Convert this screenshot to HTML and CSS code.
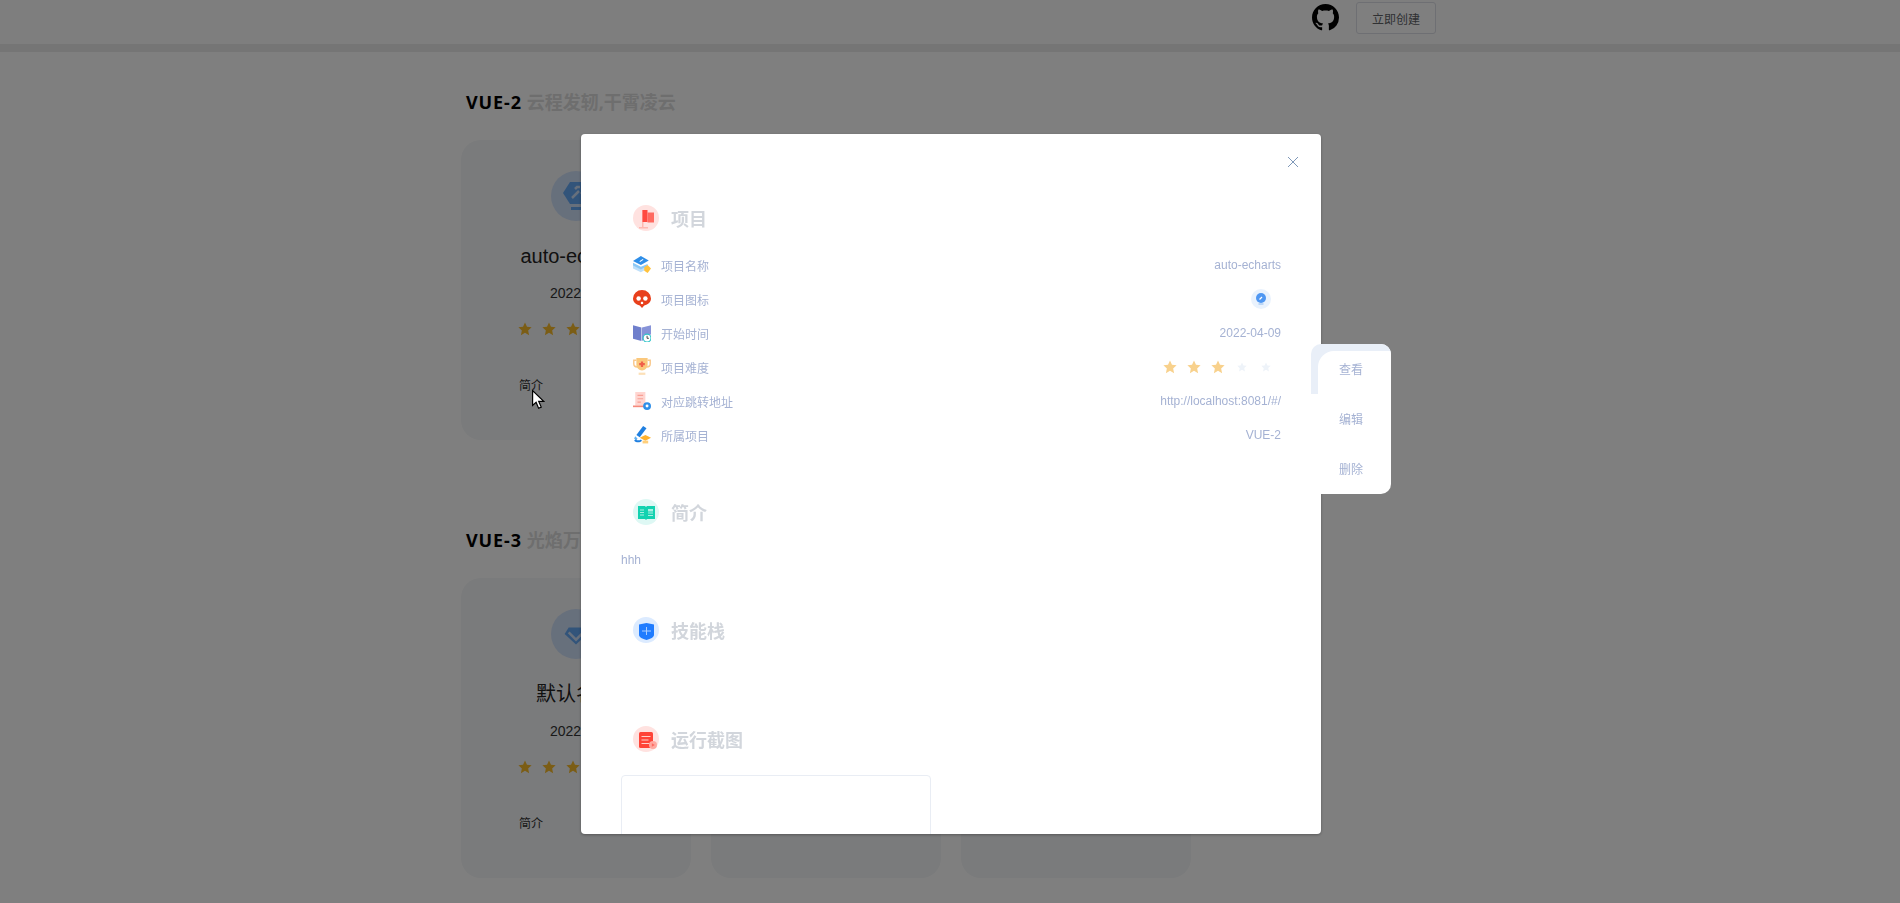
FILE: index.html
```html
<!DOCTYPE html>
<html lang="zh">
<head>
<meta charset="utf-8">
<title>项目</title>
<link rel="stylesheet" href="styles.css">
</head>
<body>
<header class="topbar">
  <svg class="github" viewBox="0 0 16 16"><path fill="#000" d="M8 0C3.58 0 0 3.58 0 8c0 3.54 2.29 6.53 5.47 7.59.4.07.55-.17.55-.38 0-.19-.01-.82-.01-1.49-2.01.37-2.53-.49-2.69-.94-.09-.23-.48-.94-.82-1.13-.28-.15-.68-.52-.01-.53.63-.01 1.08.58 1.23.82.72 1.21 1.87.87 2.33.66.07-.52.28-.87.51-1.07-1.78-.2-3.64-.89-3.64-3.95 0-.87.31-1.59.82-2.15-.08-.2-.36-1.02.08-2.12 0 0 .67-.21 2.2.82.64-.18 1.32-.27 2-.27.68 0 1.36.09 2 .27 1.53-1.04 2.2-.82 2.2-.82.44 1.1.16 1.92.08 2.12.51.56.82 1.27.82 2.15 0 3.07-1.87 3.75-3.65 3.95.29.25.54.73.54 1.48 0 1.07-.01 1.93-.01 2.2 0 .21.15.46.55.38A8.013 8.013 0 0016 8c0-4.42-3.58-8-8-8z"/></svg>
  <button class="create">立即创建</button>
</header>

<main class="page">
  <section class="group">
    <h2 class="group-title"><span class="version">VUE-2</span> <span class="motto">云程发轫,干霄凌云</span></h2>
    <div class="cards">
      <article class="card">
        <div class="card-icon"><svg viewBox="0 0 26 30"><path fill="#64a8f5" d="M7 1h12l7 11-7 11H7L0 12z"/><path fill="#64a8f5" d="M8 26h10v3H8z"/><path fill="none" stroke="#cfe0f8" stroke-width="2.500" d="M9 17l7-7"/><path fill="none" stroke="#cfe0f8" stroke-width="2.500" d="M12 8l2-2h3M18 13l2-2V8"/></svg></div>
        <h3 class="card-name">auto-echarts</h3>
        <p class="card-date">2022-04-09</p>
        <div class="stars">
          <svg class="star" viewBox="0 0 24 24"><path d="M12 1l3.400 7.300 7.900.9-5.900 5.400 1.600 7.900L12 18.600l-7 4 1.600-7.900L.7 9.200l7.900-.9z"/></svg>
          <svg class="star" viewBox="0 0 24 24"><path d="M12 1l3.400 7.300 7.900.9-5.900 5.400 1.600 7.900L12 18.600l-7 4 1.600-7.900L.7 9.200l7.900-.9z"/></svg>
          <svg class="star" viewBox="0 0 24 24"><path d="M12 1l3.400 7.300 7.900.9-5.900 5.400 1.600 7.900L12 18.600l-7 4 1.600-7.900L.7 9.200l7.900-.9z"/></svg>
        </div>
        <p class="card-intro">简介</p>
      </article>
      <article class="card"></article>
      <article class="card"></article>
    </div>
  </section>
  <section class="group">
    <h2 class="group-title"><span class="version">VUE-3</span> <span class="motto">光焰万丈,气贯长虹</span></h2>
    <div class="cards">
      <article class="card">
        <div class="card-icon"><svg viewBox="0 0 32 32"><path fill="#64a8f5" d="M16 29L2 16l5-8h18l5 8z"/><path fill="none" stroke="#cfe0f8" stroke-width="3" d="M7 14l9 9 9-9"/></svg></div>
        <h3 class="card-name">默认名称</h3>
        <p class="card-date">2022-04-09</p>
        <div class="stars">
          <svg class="star" viewBox="0 0 24 24"><path d="M12 1l3.400 7.300 7.900.9-5.900 5.400 1.600 7.900L12 18.600l-7 4 1.600-7.900L.7 9.200l7.900-.9z"/></svg>
          <svg class="star" viewBox="0 0 24 24"><path d="M12 1l3.400 7.300 7.900.9-5.900 5.400 1.600 7.900L12 18.600l-7 4 1.600-7.900L.7 9.200l7.900-.9z"/></svg>
          <svg class="star" viewBox="0 0 24 24"><path d="M12 1l3.400 7.300 7.900.9-5.900 5.400 1.600 7.900L12 18.600l-7 4 1.600-7.900L.7 9.200l7.900-.9z"/></svg>
        </div>
        <p class="card-intro">简介</p>
      </article>
      <article class="card"></article>
      <article class="card"></article>
    </div>
  </section>
</main>

<div class="overlay"></div>

<div class="dialog">
  <svg class="close" viewBox="0 0 12 12"><path fill="none" stroke="#7f98b8" stroke-width="1" d="M1 1l10 10M11 1L1 11"/></svg>

  <section class="info">
    <div class="info-head">
      <span class="head-icon tint-red"><svg viewBox="0 0 26 26"><path fill="#ffb8b0" d="M9 5h1.500v17H9zM6 22h9v1.500H6z"/><path fill="#ff4a40" d="M9.500 5h5v12h-5z"/><path fill="#ff6a60" d="M14.500 7.500H21v10h-6.500z"/></svg></span>
      <h3>项目</h3>
    </div>
    <ul class="rows">
      <li class="row">
        <span class="row-label"><svg class="row-icon" viewBox="0 0 16 16"><path fill="#bfe0fa" d="M0 8l7 3.500L13 9v2l-6 3.500L0 11z"/><path fill="#8cc8f5" d="M0 6l7 3.500L13 7v2l-6 3L0 8.500z"/><path fill="#2e8ee8" d="M7 0l7 4-7 4-7-3.500z"/><path stroke="#fff" d="M6 5l3-2"/><path fill="#ffc23d" d="M10 10l3-2 3 3-3 4-3-2z"/></svg>项目名称</span>
        <span class="row-value">auto-echarts</span>
      </li>
      <li class="row">
        <span class="row-label"><svg class="row-icon" viewBox="0 0 16 16"><path fill="#e8401c" d="M8 0a8 7.500 0 018 7.500c0 3-2.500 5.500-6 6.200L8 16l-2-2.300C2.500 13 0 10.500 0 7.500A8 7.500 0 018 0z"/><circle cx="5" cy="7.500" r="2" fill="#fff"/><circle cx="11" cy="7.500" r="2" fill="#fff"/><path fill="#fff" d="M7 10.500h2v2H7z"/></svg>项目图标</span>
        <span class="row-value"><span class="mini-icon"><svg viewBox="0 0 12 12"><circle cx="6" cy="5" r="5" fill="#4f97f2"/><path stroke="#fff" stroke-width="1.300" d="M4.500 6.500l2.500-2.500"/><path fill="#bcd6f5" d="M3.500 10h5v2h-5z"/></svg></span></span>
      </li>
      <li class="row">
        <span class="row-label"><svg class="row-icon" viewBox="0 0 16 16"><path fill="#6f7fcc" d="M0 1l7.500 2v12L0 13z"/><path fill="#8793d8" d="M8 3l8-2v8l-8 6z"/><circle cx="12.500" cy="12.500" r="3.500" fill="#fff" stroke="#2fc4c8"/><path stroke="#333" stroke-width=".8" fill="none" d="M12.500 10.500v2.200h1.600"/></svg>开始时间</span>
        <span class="row-value">2022-04-09</span>
      </li>
      <li class="row">
        <span class="row-label"><svg class="row-icon" viewBox="0 0 16 16"><path fill="none" stroke="#f9c88b" stroke-width="1.300" d="M3 2H.7v3c0 2 1.500 3 3 3M13 2h2.300v3c0 2-1.500 3-3 3"/><path fill="#fbc87c" d="M3 0h10v6c0 3-2.500 5-5 5s-5-2-5-5z"/><path fill="#f0604a" d="M7 3h2v1.500h1.500v2H9V8H7V6.500H5.500v-2H7z"/><path fill="#fce0b8" d="M5 13h6v2H5z"/></svg>项目难度</span>
        <span class="row-value pale-stars">
          <svg class="star filled" viewBox="0 0 24 24"><path d="M12 1l3.400 7.300 7.900.9-5.900 5.400 1.600 7.900L12 18.600l-7 4 1.600-7.900L.7 9.200l7.900-.9z"/></svg>
          <svg class="star filled" viewBox="0 0 24 24"><path d="M12 1l3.400 7.300 7.900.9-5.900 5.400 1.600 7.900L12 18.600l-7 4 1.600-7.900L.7 9.200l7.900-.9z"/></svg>
          <svg class="star filled" viewBox="0 0 24 24"><path d="M12 1l3.400 7.300 7.900.9-5.900 5.400 1.600 7.900L12 18.600l-7 4 1.600-7.900L.7 9.200l7.900-.9z"/></svg>
          <svg class="star void" viewBox="0 0 24 24"><path d="M12 1l3.400 7.300 7.900.9-5.900 5.400 1.600 7.900L12 18.600l-7 4 1.600-7.900L.7 9.200l7.900-.9z"/></svg>
          <svg class="star void" viewBox="0 0 24 24"><path d="M12 1l3.400 7.300 7.900.9-5.900 5.400 1.600 7.900L12 18.600l-7 4 1.600-7.900L.7 9.200l7.900-.9z"/></svg>
        </span>
      </li>
      <li class="row">
        <span class="row-label"><svg class="row-icon" viewBox="0 0 16 16"><path fill="#ffd5d0" d="M2 0h9v12H2z"/><path stroke="#f8a094" d="M4 3h5M4 6h5M4 9h3"/><path fill="#f58a7c" d="M0 12h10v1.500H0z"/><circle cx="12.500" cy="12.500" r="3.500" fill="#2e8ee8"/><circle cx="12.500" cy="12.500" r="1.300" fill="#fff"/></svg>对应跳转地址</span>
        <span class="row-value">http://localhost:8081/#/</span>
      </li>
      <li class="row">
        <span class="row-label"><svg class="row-icon" viewBox="0 0 16 16"><path fill="#1f7fe0" d="M9 0l3 2-6 8-3-2z"/><path fill="#60b0f0" d="M2 9l2 2-1 2-2-2z"/><path fill="#1f7fe0" d="M1 13c2 2 5 2 7 0l-1-1c-1 1-3 1-5 0z"/><path fill="#ffb22e" d="M11 8l5 2.500-5 2.500-5-2.500z"/><path fill="#ffcf7a" d="M8.500 13h5v2.500h-5z"/></svg>所属项目</span>
        <span class="row-value">VUE-2</span>
      </li>
    </ul>
  </section>

  <section class="info">
    <div class="info-head">
      <span class="head-icon tint-green"><svg viewBox="0 0 26 26"><path fill="#12d2b0" d="M5 7h7l1 1 1-1h8v13h-8l-1 1-1-1H5z"/><path stroke="#a8efe2" d="M7 11h4M7 13.500h4M7 16h4M15 14h5M15 16.500h5"/><path fill="#a8efe2" d="M15 10h5v2.500h-5z"/></svg></span>
      <h3>简介</h3>
    </div>
    <p class="intro-text">hhh</p>
  </section>

  <section class="info">
    <div class="info-head">
      <span class="head-icon tint-blue"><svg viewBox="0 0 26 26"><path fill="#1f7cff" d="M6 7.500L13.500 6 21 7.500V18c0 2-3.500 4-7.500 5C9.500 22 6 20 6 18z"/><path stroke="#a9cdff" d="M9 14h9M13.500 10v8"/></svg></span>
      <h3>技能栈</h3>
    </div>
    <div class="stack"></div>
  </section>

  <section class="info">
    <div class="info-head">
      <span class="head-icon tint-red"><svg viewBox="0 0 26 26"><rect fill="#ff4438" x="6" y="6" width="14" height="16" rx="1.500"/><path stroke="#ffd0cb" d="M8.500 10.500h9M8.500 14h7M8.500 17.500h8"/><circle cx="20" cy="19" r="4" fill="#ffa9a1"/><path fill="#ff6a60" d="M18.800 17.300l3 1.700-3 1.700z"/></svg></span>
      <h3>运行截图</h3>
    </div>
    <div class="shot"></div>
  </section>
</div>

<ul class="action-menu">
  <li class="action active"><span>查看</span></li>
  <li class="action"><span>编辑</span></li>
  <li class="action"><span>删除</span></li>
</ul>

<svg class="cursor" viewBox="0 0 13 19"><path fill="#fff" stroke="#000" stroke-width="1.200" d="M.6.600v14.800l3.500-3.200 2.500 6 2.600-1.100-2.500-5.800h5z"/></svg>
</body>
</html>
```

FILE: styles.css
```css
* { box-sizing: border-box; }
html, body {
  margin: 0;
  height: 903px;
  overflow: hidden;
  background: #fff;
  font-family: "Liberation Sans", "Noto Sans CJK SC", sans-serif;
}
h2, h3, p, ul { margin: 0; padding: 0; }
ul { list-style: none; }

.topbar {
  height: 52px;
  border-bottom: 8px solid #eaeaea;
  display: flex;
  align-items: flex-start;
  justify-content: flex-end;
  padding: 2px 464px 0 0;
  gap: 17px;
  background: #fcfcfc;
}
.github { width: 27px; height: 27px; margin-top: 2px; }
.create {
  width: 80px;
  height: 32px;
  padding: 0;
  background: #fff;
  border: 1px solid #dcdfe6;
  border-radius: 3px;
  color: #606266;
  font: 12px "Liberation Sans", "Noto Sans CJK SC", sans-serif;
}

.page { width: 978px; margin: 0 auto; padding-top: 32px; }
.group + .group { margin-top: 82px; }
.group-title {
  height: 36px;
  margin-bottom: 20px;
  padding-left: 5px;
  font: 700 18px/36px "Noto Sans", "Noto Sans CJK SC", sans-serif;
  color: #000;
}
.version { letter-spacing: .9px; }
.motto { color: #dcdcdc; }
.cards { display: flex; gap: 20px; }
.card {
  flex: none;
  width: 230px;
  height: 300px;
  padding: 31px 0 0;
  background: #f4f6f8;
  border-radius: 20px;
  display: flex;
  flex-direction: column;
}
.card-icon {
  width: 50px;
  height: 50px;
  margin: 0 auto;
  border-radius: 50%;
  background: #cfe0f8;
  padding: 10px 12px;
}
.card-icon svg { display: block; width: 26px; height: 30px; }
.card-name {
  margin-top: 23px;
  font-size: 20px;
  line-height: 24px;
  font-weight: 400;
  color: #222;
  text-align: center;
}
.card-date {
  margin-top: 15px;
  padding-left: 89px;
  font-size: 14px;
  line-height: 20px;
  color: #333;
}
.stars { margin-top: 14px; padding-left: 57px; height: 24px; display: flex; align-items: center; gap: 10px; }
.star { width: 14px; height: 14px; display: block; fill: #f7ba2a; }
.card-intro {
  margin-top: 35px;
  padding-left: 58px;
  font-size: 12px;
  line-height: 20px;
  color: #333;
}

.cursor { position: fixed; left: 532px; top: 390px; width: 13px; height: 19px; }

.overlay { position: fixed; inset: 0; background: rgba(0, 0, 0, .5); }

.dialog {
  position: fixed;
  left: 581px;
  top: 134px;
  width: 740px;
  height: 700px;
  padding: 71px 40px 0;
  overflow: hidden;
  background: #fff;
  border-radius: 4px;
  box-shadow: 0 1px 3px rgba(0, 0, 0, .3);
}
.close { position: absolute; right: 22px; top: 22px; width: 12px; height: 12px; }

.info { margin-bottom: 47px; }
.info-head { display: flex; align-items: center; gap: 12px; height: 26px; padding-left: 12px; }
.info-head h3 { font-size: 18px; font-weight: 700; color: #d2d6dc; }
.head-icon {
  width: 26px;
  height: 26px;
  border-radius: 50%;
  display: block;
}
.head-icon svg { display: block; width: 26px; height: 26px; }
.tint-red { background: #ffe2e0; }
.tint-green { background: #def8f4; }
.tint-blue { background: #dcebff; }

.rows { margin-top: 17px; }
.row {
  height: 34px;
  padding-left: 12px;
  display: flex;
  align-items: center;
  justify-content: space-between;
  font-size: 12px;
  color: #a5b2d3;
}
.row-label { display: flex; align-items: center; gap: 10px; }
.row-icon { width: 18px; height: 18px; display: block; }
.row-value { display: flex; align-items: center; }
.mini-icon {
  width: 20px;
  height: 20px;
  margin-right: 10px;
  border-radius: 50%;
  background: #e9f2fd;
  padding: 4px;
  display: block;
}
.mini-icon svg { display: block; width: 12px; height: 12px; }
.pale-stars { gap: 10px; padding-right: 8px; }
.star.filled { fill: #f8d18c; }
.star.void { fill: #eef3f9; width: 10px; height: 10px; margin: 0 2px; }

.intro-text {
  margin: 25px 0 -30px;
  font-size: 12px;
  line-height: 20px;
  color: #a5b2d3;
}
.info .intro-text { margin-bottom: 17px; }
.stack { height: 36px; }
.shot {
  width: 310px;
  height: 200px;
  margin-top: 23px;
  border: 1px solid #e9edf4;
  border-radius: 4px;
}

.action-menu {
  position: fixed;
  left: 1311px;
  top: 344px;
  width: 80px;
  height: 150px;
  overflow: hidden;
  background: #fff;
  border-radius: 10px;
}
.action {
  position: relative;
  height: 50px;
  padding-bottom: 2px;
  display: flex;
  align-items: center;
  justify-content: center;
  font-size: 12px;
  color: #a5b2d3;
}
.action span { position: relative; }
.action.active { background: #e9eff8; }
.action.active::before {
  content: "";
  position: absolute;
  inset: 7px 0 0 7px;
  background: #fff;
  border-top-left-radius: 16px;
}
```
